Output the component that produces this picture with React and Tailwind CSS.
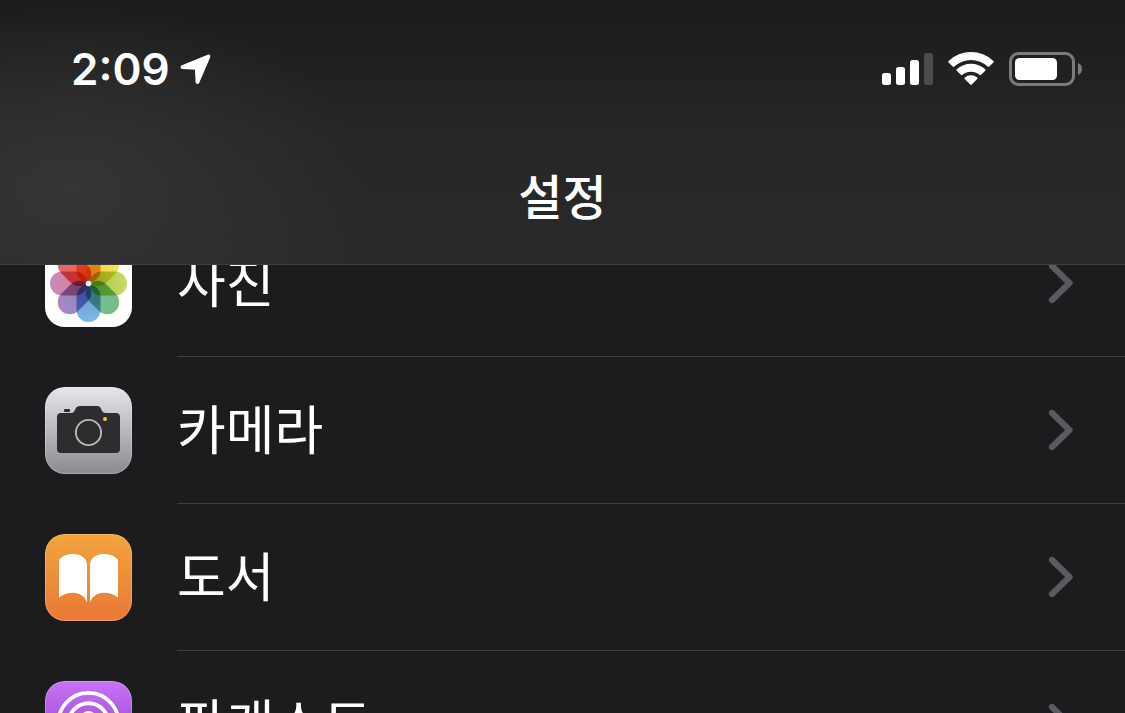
import React from 'react';

// each petal fades from its inner tone to a paler tip
const petals = [
  { angle: 0, inner: '#f09a3c', tip: '#f5a94c' },
  { angle: 45, inner: '#efd447', tip: '#f5e75a' },
  { angle: 90, inner: '#adcb54', tip: '#c9dc66' },
  { angle: 135, inner: '#74bda0', tip: '#79bd80' },
  { angle: 180, inner: '#6f9fd6', tip: '#7db9e4' },
  { angle: 225, inner: '#8f86c6', tip: '#a98bc0' },
  { angle: 270, inner: '#d98098', tip: '#c48bbd' },
  { angle: 315, inner: '#ec6250', tip: '#e56a78' },
];

function PhotosIcon() {
  return (
    <svg viewBox="0 0 87 87" className="block size-full isolate" aria-hidden="true">
      <defs>
        {petals.map(p => (
          <linearGradient key={p.angle} id={`petal-${p.angle}`} x1="0" y1="1" x2="0" y2="0">
            <stop offset="0.3" stopColor={p.inner} />
            <stop offset="1" stopColor={p.tip} />
          </linearGradient>
        ))}
      </defs>
      <rect width="87" height="87" fill="#fff" />
      {petals.map(p => (
        <rect
          key={p.angle}
          x="31.5"
          y="5"
          width="24"
          height="37.5"
          rx="12"
          fill={`url(#petal-${p.angle})`}
          transform={`rotate(${p.angle} 43.5 43.5)`}
          className="mix-blend-multiply"
        />
      ))}
      <circle cx="43.5" cy="43.5" r="2.8" fill="#fff" />
    </svg>
  );
}

function CameraIcon() {
  return (
    <svg viewBox="0 0 87 87" className="block size-full" aria-hidden="true">
      <defs>
        <linearGradient id="camera-bg" x1="0" y1="0" x2="0" y2="1">
          <stop offset="0" stopColor="#e6e5ea" />
          <stop offset="1" stopColor="#8b8a8f" />
        </linearGradient>
      </defs>
      <rect width="87" height="87" fill="url(#camera-bg)" />
      <rect x="19" y="22" width="6" height="3" rx="1" fill="#2d2d2f" />
      <path
        d="M16 26H26C28 26 29 25 30 23C31 20 32.500 19 35 19H52C54.500 19 55.500 20 56.500 23C57.500 25 58.500 26 60.500 26H71C73.500 26 75 27.500 75 30V62C75 64.500 73.500 66 71 66H16C13.500 66 12 64.500 12 62V30C12 27.500 13.500 26 16 26Z"
        fill="#2d2d2f"
      />
      <circle cx="43.5" cy="45.5" r="12.6" fill="none" stroke="#b9b9bb" strokeWidth="1.9" />
      <circle cx="60" cy="32" r="2" fill="#f2c838" />
    </svg>
  );
}

function BooksIcon() {
  return (
    <svg viewBox="0 0 87 87" className="block size-full" aria-hidden="true">
      <defs>
        <linearGradient id="books-bg" x1="0" y1="0" x2="0" y2="1">
          <stop offset="0" stopColor="#f1a53c" />
          <stop offset="1" stopColor="#e97836" />
        </linearGradient>
      </defs>
      <rect width="87" height="87" fill="url(#books-bg)" />
      <path
        d="M14 26C17 22 22 20 28 20C36 20 42 24 42 31V68.500C40 62.500 35 58.700 28 58.700C22 58.700 18 60.500 14 63.500Z"
        fill="#fff"
      />
      <path
        d="M73 26C70 22 65 20 59 20C51 20 45 24 45 31V68.500C47 62.500 52 58.700 59 58.700C65 58.700 69 60.500 73 63.500Z"
        fill="#fff"
      />
    </svg>
  );
}

function PodcastsIcon() {
  return (
    <svg viewBox="0 0 87 87" className="block size-full" aria-hidden="true">
      <defs>
        <linearGradient id="podcasts-bg" x1="0" y1="0" x2="0" y2="1">
          <stop offset="0" stopColor="#c873f3" />
          <stop offset="1" stopColor="#8035c8" />
        </linearGradient>
      </defs>
      <rect width="87" height="87" fill="url(#podcasts-bg)" />
      <g fill="none" stroke="#fff" strokeWidth="3.8" strokeLinecap="round">
        <path d="M28 67.500A30 30 0 1 1 59 67.500" />
        <path d="M30 57A20 20 0 1 1 57 57" />
      </g>
      <circle cx="43.5" cy="38" r="8" fill="#fff" />
      <path d="M36 53C36 48 51 48 51 53L49 71C48 76 39 76 38 71Z" fill="#fff" />
    </svg>
  );
}

function Chevron() {
  return (
    <svg viewBox="0 0 26 42" className="h-[42px] w-[26px] shrink-0" aria-hidden="true">
      <path
        d="M4 4L21.500 21L4 38"
        fill="none"
        stroke="#5b5b5f"
        strokeWidth="6.200"
        strokeLinecap="round"
        strokeLinejoin="round"
      />
    </svg>
  );
}

function StatusBar() {
  return (
    <div className="flex items-center justify-between pl-[71px] pr-[42px]">
      <div className="flex items-center gap-2.5">
        <span className="font-['Inter',sans-serif] text-[44px] leading-[56px] font-semibold">2:09</span>
        <svg viewBox="0 0 31 31" className="size-[31px]" aria-hidden="true">
          <path
            d="M2.500 13L28.500 2.500L17.500 28L16.700 13.800Z"
            fill="#fff"
            stroke="#fff"
            strokeWidth="3.800"
            strokeLinejoin="round"
          />
        </svg>
      </div>
      <div className="flex items-center gap-[15px]">
        <svg viewBox="0 0 51 34" className="h-[34px] w-[51px]" aria-hidden="true">
          <rect x="0" y="21" width="9" height="12" rx="2.5" fill="#fff" />
          <rect x="14" y="15" width="9" height="18" rx="2.5" fill="#fff" />
          <rect x="28" y="8" width="9" height="25" rx="2.5" fill="#fff" />
          <rect x="42" y="1" width="9" height="32" rx="2.5" fill="#4c4c4e" />
        </svg>
        <svg viewBox="0 0 46 34" className="h-[34px] w-[46px]" aria-hidden="true">
          <path
            d="M0.600 9A32.500 32.500 0 0 1 45.400 9Q46 9.800 45.400 10.500L41.300 14.600Q40.500 15.200 39.700 14.600A24.500 24.500 0 0 0 6.300 14.600Q5.500 15.200 4.700 14.600L0.600 10.500Q0 9.800 0.600 9Z"
            fill="#fff"
          />
          <path
            d="M8.700 17.300A21 21 0 0 1 37.300 17.300Q38 18 37.300 18.800L33.100 22.800Q32.300 23.500 31.500 22.800A13 13 0 0 0 14.500 22.800Q13.700 23.500 12.900 22.800L8.700 18.800Q8 18 8.700 17.300Z"
            fill="#fff"
          />
          <path
            d="M16.800 25.500A9.500 9.500 0 0 1 29.200 25.500Q29.900 26.200 29.200 26.900L23.800 32.600Q23 33.400 22.200 32.600L16.800 26.900Q16.100 26.200 16.800 25.500Z"
            fill="#fff"
          />
        </svg>
        <svg viewBox="0 0 74 34" className="h-[34px] w-[74px]" aria-hidden="true">
          <rect x="1.5" y="1.5" width="63" height="31" rx="8" fill="none" stroke="#7b7b7d" strokeWidth="3" />
          <rect x="6" y="6" width="42" height="22" rx="4.5" fill="#fff" />
          <path d="M69 11C74.300 12.500 74.300 21.500 69 23Z" fill="#7b7b7d" />
        </svg>
      </div>
    </div>
  );
}

const rows = [
  { label: '사진', Icon: PhotosIcon },
  { label: '카메라', Icon: CameraIcon },
  { label: '도서', Icon: BooksIcon },
  { label: '팟캐스트', Icon: PodcastsIcon },
];

export default function App() {
  return (
    <div className="h-screen overflow-hidden bg-[#1c1c1e] font-['Noto_Sans_CJK_KR',sans-serif] text-white">
      <header className="relative z-10 border-b border-[#3d3d3f] bg-[radial-gradient(ellipse_300px_190px_at_70px_190px,#363435,#36343580_50%,transparent),linear-gradient(to_bottom,#1b1b1c,#262627_50%,#2a2a2c)] pt-[41px] pb-[34px]">
        <StatusBar />
        <h1 className="mt-[61px] text-center text-[48px] leading-[72px] font-medium">설정</h1>
      </header>

      {/* scrolled list, first row runs under the header */}
      <ul className="-mt-[55px]">
        {rows.map(({ label, Icon }) => (
          <li key={label}>
            <a href="#" className="flex items-stretch gap-[45px] pl-[45px]">
              <span className="relative my-[30px] size-[87px] shrink-0 overflow-hidden rounded-[20px]">
                <Icon />
                <span className="absolute inset-0 rounded-[20px] border border-white/25" />
              </span>
              <span className="flex grow items-center justify-between border-b border-[#3d3d40] pr-[51px]">
                <span className="pb-1.5 text-[53px] leading-[72px]">{label}</span>
                <Chevron />
              </span>
            </a>
          </li>
        ))}
      </ul>
    </div>
  );
}
